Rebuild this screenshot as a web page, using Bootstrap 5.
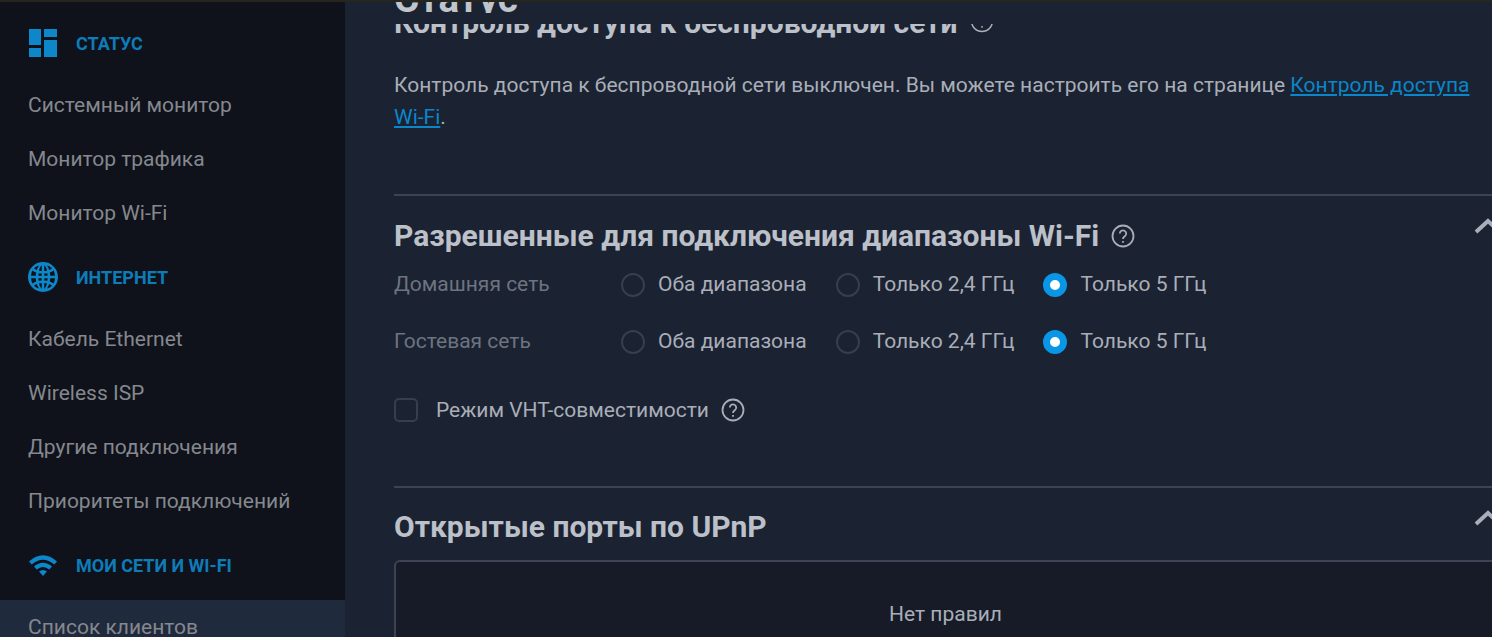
<!DOCTYPE html>
<html lang="ru">
<head>
  <meta charset="UTF-8">
  <title>Сегменты</title>
  <link href="https://cdn.jsdelivr.net/npm/bootstrap@5.3.0/dist/css/bootstrap.min.css" rel="stylesheet">
  <style>
    html, body { height: 100%; }
    body {
      font-family: Roboto, "Liberation Sans", sans-serif;
      background-color: #1b2232;
      color: #b4b9c2;
      overflow: hidden;
    }
    .topline { height: 2px; background-color: #26261f; }
    .page-wrap { height: 635px; }
    .side-menu {
      width: 345px;
      flex-shrink: 0;
      background-color: #0f121a;
      padding-top: 22px;
      overflow: hidden;
    }
    .menu-head {
      height: 38px;
      padding-left: 28px;
      margin-bottom: 16px;
      color: #0d7cb8;
      font-size: 18px;
      font-weight: 700;
    }
    .menu-head svg { width: 30px; height: 30px; margin-right: 18px; fill: #0d87ca; }
    .menu-item {
      display: block;
      height: 54px;
      line-height: 54px;
      padding-left: 28px;
      font-size: 21px;
      color: #85888e;
      text-decoration: none;
    }
    .menu-item-active { background-color: #202a3d; }
    .menu-gap { margin-top: 18px; }
    .main-area {
      flex-grow: 1;
      min-width: 0;
      padding-left: 49px;
      overflow: hidden;
      position: relative;
    }
    .sticky-title {
      position: absolute;
      left: 49px;
      top: 0;
      height: 22px;
      right: 0;
      background-color: #1b2232;
    }
    .sticky-clip { height: 11px; overflow: hidden; }
    .sticky-text {
      margin-top: -23px;
      font-size: 38.500px;
      line-height: 40px;
      font-weight: 700;
      color: #c0c4cb;
    }
    .sec-title {
      font-size: 30px;
      line-height: 36px;
      font-weight: 700;
      color: #bcc0c8;
      margin: 0;
    }
    .intro { font-size: 21px; line-height: 32px; margin: 0; color: #a9aeb8; }
    .intro a { color: #0b86c9; }
    .clip-title { padding-top: 3px; height: 67px; }
    .rule { height: 2px; background-color: #3b4354; margin-top: 61px; }
    .rule-next { margin-top: 60px; }
    .help-ico { width: 24px; height: 24px; margin-left: 12px; flex-shrink: 0; }
    .fold-ico { position: absolute; left: 1080px; top: 22px; width: 28px; height: 16px; }
    .head-line { padding-top: 21px; }
    .head-line-first { padding-top: 22px; margin-bottom: 2px; }
    .band-row { height: 57px; font-size: 21px; }
    .band-name { width: 227px; color: #6d7480; }
    .opt { display: flex; align-items: center; margin-right: 29px; color: #a9aeb8; }
    .opt-ring {
      width: 24px; height: 24px; border-radius: 50%;
      border: 2px solid #373e4d; margin-right: 13px;
    }
    .opt-on { border: 7px solid #0a96e6; background-color: #fff; }
    .check-box {
      width: 24px; height: 24px; border-radius: 5px;
      border: 2px solid #373e4d; margin-right: 18px;
    }
    .empty-box {
      height: 120px;
      margin-right: -5px;
      margin-top: 15px;
      background-color: #161b27;
      border: 2px solid #3b4354;
      border-radius: 6px 0 0 0;
      font-size: 21px;
      line-height: 32px;
      color: #a9aeb8;
      padding-top: 36px;
      text-align: center;
    }
  </style>
</head>
<body>
  <div class="topline"></div>
  <div class="d-flex page-wrap">
    <nav class="side-menu">
      <div class="menu-head d-flex align-items-center">
        <svg viewBox="0 0 30 30"><path d="M1 1h12v16H1zM16 1h13v8H16zM16 12h13v17H16zM1 20h12v9H1z"/></svg>
        СТАТУС
      </div>
      <a class="menu-item" href="#">Системный монитор</a>
      <a class="menu-item" href="#">Монитор трафика</a>
      <a class="menu-item" href="#">Монитор Wi-Fi</a>
      <div class="menu-head menu-gap d-flex align-items-center">
        <svg viewBox="0 0 30 30"><path fill-rule="evenodd" d="M15 0a15 15 0 1 0 0 30a15 15 0 0 0 0-30zM6 6.200A12 12 0 0 1 11 3.500Q9.500 5.500 8.800 8Q7.200 7.300 6 6.200zM24 6.200Q22.800 7.300 21.200 8Q20.500 5.500 19 3.500A12 12 0 0 1 24 6.200zM13.700 3Q11.500 5.500 11 8.800Q12.300 9 13.700 9.100zM16.300 3V9.100Q17.700 9 19 8.800Q18.500 5.500 16.300 3zM3 13.700Q3.300 10.500 4.400 8.400Q6 9.700 8.200 10.600Q7.900 12 7.800 13.700zM10.400 13.700Q10.500 12.200 10.700 11.200Q12.200 11.600 13.700 11.600V13.700zM16.300 13.700V11.600Q17.800 11.600 19.300 11.200Q19.500 12.200 19.600 13.700zM22.200 13.700Q22.100 12 21.800 10.600Q24 9.700 25.600 8.400Q26.700 10.500 27 13.700zM3 16.300H7.800Q7.900 18 8.200 19.400Q6 20.300 4.400 21.600Q3.300 19.500 3 16.300zM10.400 16.300H13.700V18.400Q12.200 18.400 10.700 18.800Q10.500 17.800 10.400 16.300zM16.300 16.300H19.600Q19.500 17.800 19.300 18.800Q17.800 18.400 16.300 18.400zM22.200 16.300H27Q26.700 19.500 25.600 21.600Q24 20.300 21.800 19.400Q22.100 18 22.200 16.300zM13.700 20.900V27Q11.500 24.500 11 21.200Q12.300 21 13.700 20.900zM16.300 20.900Q17.700 21 19 21.200Q18.500 24.500 16.300 27zM6 23.800Q7.200 22.700 8.800 22Q9.500 24.500 11 26.500A12 12 0 0 1 6 23.800zM21.200 22Q22.800 22.700 24 23.800A12 12 0 0 1 19 26.500Q20.500 24.500 21.200 22z"/></svg>
        ИНТЕРНЕТ
      </div>
      <a class="menu-item" href="#">Кабель Ethernet</a>
      <a class="menu-item" href="#">Wireless ISP</a>
      <a class="menu-item" href="#">Другие подключения</a>
      <a class="menu-item" href="#">Приоритеты подключений</a>
      <div class="menu-head menu-gap d-flex align-items-center">
        <svg viewBox="0 0 30 30"><path d="M1 11.500Q15-1 29 11.500L26.300 14.500Q15 5 3.700 14.500zM6 16.500Q15 9 24 16.500L21.300 19.500Q15 14.500 8.700 19.500zM11 21.500Q15 18.500 19 21.500L15 26z"/></svg>
        МОИ СЕТИ И WI-FI
      </div>
      <a class="menu-item menu-item-active" href="#">Список клиентов</a>
    </nav>
    <main class="main-area">
      <div class="clip-title d-flex align-items-start">
        <h2 class="sec-title">Контроль доступа к беспроводной сети</h2>
        <svg class="help-ico mt-1" viewBox="0 0 24 24" fill="none" stroke="#a9aeb8" stroke-width="1.500"><circle cx="12" cy="12" r="10.500"/><path d="M8.800 9.500a3.200 3.200 0 1 1 5 2.700c-1.200.8-1.800 1.400-1.800 2.800"/><path d="M12 17v1.800"/></svg>
      </div>
      <div class="sticky-title"><div class="sticky-clip"><div class="sticky-text">Статус</div></div></div>
      <p class="intro">Контроль доступа к беспроводной сети выключен. Вы можете настроить его на странице <a href="#">Контроль доступа <span class="text-nowrap">Wi-Fi</span></a>.</p>
      <div class="rule"></div>
      <section class="position-relative">
        <div class="d-flex align-items-center head-line-first">
          <h2 class="sec-title">Разрешенные для подключения диапазоны Wi-Fi</h2>
          <svg class="help-ico" viewBox="0 0 24 24" fill="none" stroke="#a9aeb8" stroke-width="1.800"><circle cx="12" cy="12" r="10.500"/><path d="M8.800 9.500a3.200 3.200 0 1 1 5 2.700c-1.200.8-1.800 1.400-1.800 2.800"/><path d="M12 17v1.800"/></svg>
          <svg class="fold-ico" viewBox="0 0 28 16" fill="none" stroke="#a9aeb8" stroke-width="4"><path d="M2 14 14 3 26 14"/></svg>
        </div>
        <div class="band-row d-flex align-items-center">
          <div class="band-name">Домашняя сеть</div>
          <label class="opt"><span class="opt-ring"></span>Оба диапазона</label>
          <label class="opt"><span class="opt-ring"></span>Только 2,4 ГГц</label>
          <label class="opt"><span class="opt-ring opt-on"></span>Только 5 ГГц</label>
        </div>
        <div class="band-row d-flex align-items-center">
          <div class="band-name">Гостевая сеть</div>
          <label class="opt"><span class="opt-ring"></span>Оба диапазона</label>
          <label class="opt"><span class="opt-ring"></span>Только 2,4 ГГц</label>
          <label class="opt"><span class="opt-ring opt-on"></span>Только 5 ГГц</label>
        </div>
        <div class="d-flex align-items-center intro mt-4">
          <span class="check-box"></span>Режим VHT-совместимости
          <svg class="help-ico" viewBox="0 0 24 24" fill="none" stroke="#a9aeb8" stroke-width="1.800"><circle cx="12" cy="12" r="10.500"/><path d="M8.800 9.500a3.200 3.200 0 1 1 5 2.700c-1.200.8-1.800 1.400-1.800 2.800"/><path d="M12 17v1.800"/></svg>
        </div>
      </section>
      <div class="rule rule-next"></div>
      <section class="position-relative">
        <div class="d-flex align-items-center head-line">
          <h2 class="sec-title">Открытые порты по UPnP</h2>
          <svg class="fold-ico" viewBox="0 0 28 16" fill="none" stroke="#a9aeb8" stroke-width="4"><path d="M2 14 14 3 26 14"/></svg>
        </div>
        <div class="empty-box">Нет правил</div>
      </section>
    </main>
  </div>
  <script src="https://cdn.jsdelivr.net/npm/bootstrap@5.3.0/dist/js/bootstrap.bundle.min.js"></script>
</body>
</html>
